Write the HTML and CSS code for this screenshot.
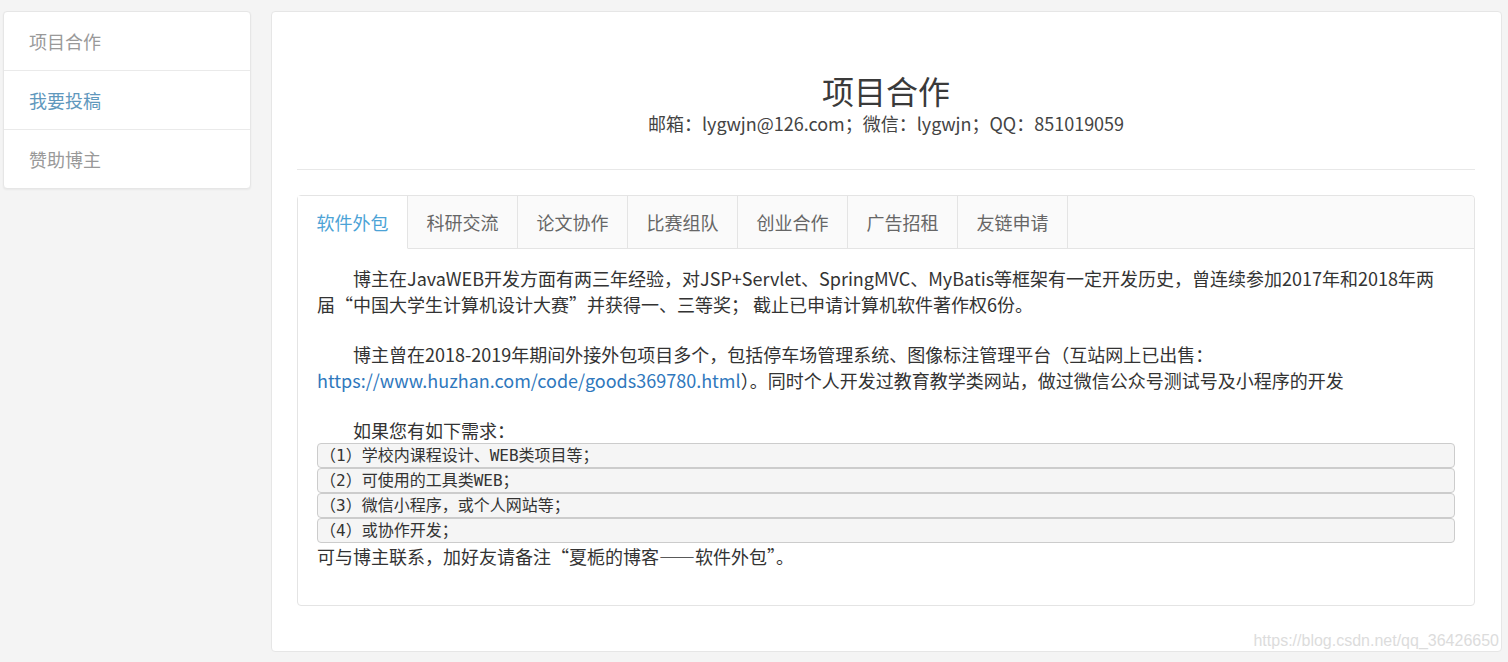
FILE: index.html
```html
<!DOCTYPE html>
<html lang="zh-CN">
<head>
<meta charset="utf-8">
<title>项目合作</title>
<link rel="stylesheet" href="styles.css">
</head>
<body>
<div class="page">
  <aside class="sidebar">
    <a class="side-item">项目合作</a>
    <a class="side-item hover">我要投稿</a>
    <a class="side-item">赞助博主</a>
  </aside>
  <main class="main">
    <header class="head">
      <h1 class="title">项目合作</h1>
      <p class="contact">邮箱：lygwjn@126.com；微信：lygwjn；QQ：851019059</p>
    </header>
    <section class="tabs">
      <nav class="tab-bar">
        <span class="tab active">软件外包</span>
        <span class="tab">科研交流</span>
        <span class="tab">论文协作</span>
        <span class="tab">比赛组队</span>
        <span class="tab">创业合作</span>
        <span class="tab">广告招租</span>
        <span class="tab">友链申请</span>
      </nav>
      <div class="tab-body">
        <p class="para">博主在JavaWEB开发方面有两三年经验，对JSP+Servlet、SpringMVC、MyBatis等框架有一定开发历史，曾连续参加2017年和2018年两<br>届“中国大学生计算机设计大赛”并获得一、三等奖； 截止已申请计算机软件著作权6份。</p>
        <p class="para">博主曾在2018-2019年期间外接外包项目多个，包括停车场管理系统、图像标注管理平台（互站网上已出售：<br><a class="link">https://www.huzhan.com/code/goods369780.html</a>）。同时个人开发过教育教学类网站，做过微信公众号测试号及小程序的开发</p>
        <p class="para tight">如果您有如下需求：</p>
        <pre class="code">（1）学校内课程设计、WEB类项目等；</pre>
        <pre class="code">（2）可使用的工具类WEB；</pre>
        <pre class="code">（3）微信小程序，或个人网站等；</pre>
        <pre class="code">（4）或协作开发；</pre>
        <p class="plain">可与博主联系，加好友请备注“夏栀的博客——软件外包”。</p>
      </div>
    </section>
  </main>
</div>
<div class="watermark">https://blog.csdn.net/qq_36426650</div>
</body>
</html>
```

FILE: styles.css
```css
html, body {
  margin: 0;
  padding: 0;
  background: #f4f4f4;
}
body {
  font-family: "Noto Sans CJK SC", "Noto Sans", sans-serif;
  color: #333;
  font-size: 18px;
}
.page {
  display: flex;
  align-items: flex-start;
  gap: 20px;
  padding: 11px 6px 11px 3px;
}
.sidebar {
  width: 248px;
  flex: none;
  background: #fff;
  border: 1px solid #e6e6e6;
  border-radius: 4px;
  box-sizing: border-box;
  display: flex;
  flex-direction: column;
  box-shadow: 0 1px 2px rgba(0,0,0,0.05);
}
.side-item {
  display: flex;
  align-items: center;
  height: 58px;
  padding-left: 25px;
  color: #999;
  font-size: 18px;
  border-top: 1px solid #eaeaea;
  text-decoration: none;
}
.side-item:first-child {
  border-top: none;
}
.side-item.hover {
  color: #5f98bd;
}
.main {
  flex: 1;
  background: #fff;
  border: 1px solid #e6e6e6;
  border-radius: 4px;
  padding: 0 26px 45px 25px;
  min-height: 594px;
}
.head {
  text-align: center;
  padding-top: 58px;
  padding-bottom: 33px;
  border-bottom: 1px solid #e8e8e8;
  margin-bottom: 25px;
}
.title {
  margin: 0;
  font-size: 32px;
  font-weight: normal;
  color: #3a3a3a;
  line-height: 40px;
}
.contact {
  margin: 0;
  font-size: 18px;
  line-height: 26px;
  color: #444;
}
.tabs {
  border: 1px solid #e4e4e4;
  border-radius: 4px;
}
.tab-bar {
  display: flex;
  background: #fafafa;
  border-bottom: 1px solid #e4e4e4;
  border-radius: 4px 4px 0 0;
}
.tab {
  width: 109px;
  height: 52px;
  display: flex;
  align-items: center;
  justify-content: center;
  color: #666;
  font-size: 18px;
  border-right: 1px solid #e4e4e4;
  margin-bottom: -1px;
}
.tab.active {
  background: #fff;
  color: #4ca3d6;
  border-bottom: 1px solid #fff;
}
.tab-body {
  padding: 16px 19px 36px 19px;
}
.para {
  margin: 0 0 24px 0;
  text-indent: 2em;
  line-height: 26px;
  font-size: 18px;
  color: #333;
}
.para.tight {
  margin-bottom: 0;
}
.link {
  color: #2f78bd;
  text-decoration: none;
}
.code {
  margin: 0;
  font-family: "DejaVu Sans Mono", "Noto Sans CJK SC", monospace;
  font-size: 16px;
  line-height: 23px;
  padding: 0 2px;
  background: #f5f5f5;
  border: 1px solid #ccc;
  border-radius: 4px;
  color: #333;
}
.plain {
  margin: 0;
  line-height: 26px;
  font-size: 18px;
}
.watermark {
  position: absolute;
  right: 9px;
  top: 632px;
  font-family: "Liberation Sans", Arial, sans-serif;
  font-size: 16px;
  color: #dcdcdc;
}
```
